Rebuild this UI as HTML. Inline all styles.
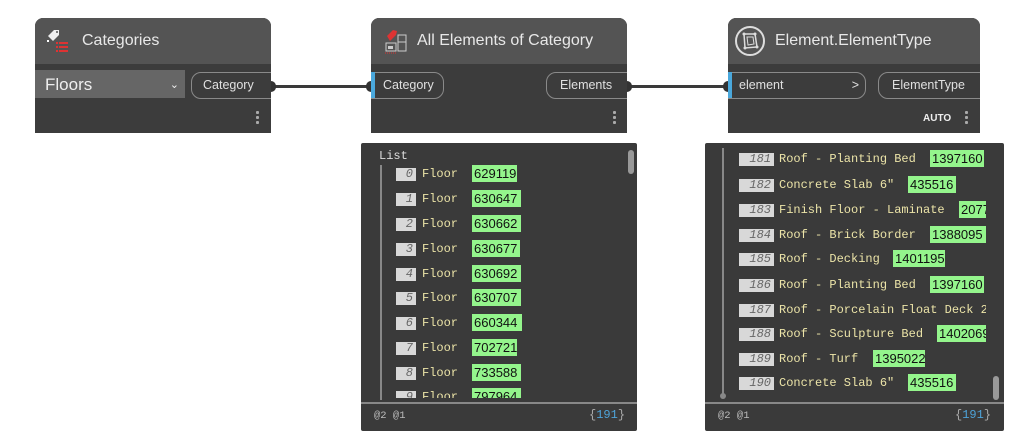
<!DOCTYPE html>
<html><head><meta charset="utf-8"><style>
*{margin:0;padding:0;box-sizing:border-box}
body{width:1016px;height:442px;background:#fff;position:relative;overflow:hidden;font-family:"Liberation Sans",sans-serif}
.abs{position:absolute}
.node{position:absolute;top:18px;height:115px;background:#3c3c3c;border-radius:8px 8px 0 0;overflow:hidden}
.hdr{position:absolute;left:0;right:0;top:0;height:46px;background:#545454}
.title{position:absolute;top:14px;color:#e8e8e8;font-size:16px}
.pill{position:absolute;top:54px;height:27px;border:1px solid #8a8a8a;border-radius:10px;color:#e0e0e0;font-size:12.5px;line-height:25px;padding-left:11px}
.dots{position:absolute;width:3px;top:93px}
.dots i{display:block;width:3px;height:3px;background:#aaa;margin-bottom:2px;border-radius:1px}
.wire{position:absolute;height:3px;top:85px;background:#3a3a3a}
.prev{position:absolute;top:143px;height:288px;background:#3a3a3a;border-radius:2px}
.foot{position:absolute;left:0;right:0;top:259px;height:2px;background:#888}
.ft{position:absolute;top:267px;font-family:"Liberation Mono",monospace;font-size:10.5px;color:#bbb}
.cnt{position:absolute;top:265px;font-family:"Liberation Mono",monospace;font-size:12px;color:#aaa}
.cnt b{color:#4ea3d8;font-weight:normal}
.row{position:absolute;height:18px;font-family:"Liberation Mono",monospace;font-size:12px;color:#ece4a8;line-height:19px;white-space:nowrap}
.ix{position:absolute;top:3px;height:13px;background:#d8d8d8;color:#666;font-style:italic;font-size:12px;line-height:13px;text-align:right;padding-right:3px}
.g{position:absolute;top:0;height:17px;background:#94f58c;color:#111;font-family:"Liberation Sans",sans-serif;font-size:13px;line-height:17px;padding-left:2px;overflow:hidden}
.clip{position:absolute;overflow:hidden}
.sb{position:absolute;width:6px;background:#999;border-radius:3px}
</style></head><body>

<div class="wire" style="left:271px;width:100px"></div>
<div class="wire" style="left:627px;width:101px"></div>
<div class="abs" style="left:270px;top:81px;width:6px;height:11px;background:#333;border-radius:0 5px 5px 0"></div>
<div class="abs" style="left:366px;top:81px;width:6px;height:11px;background:#333;border-radius:5px 0 0 5px"></div>
<div class="abs" style="left:626px;top:81px;width:6px;height:11px;background:#333;border-radius:0 5px 5px 0"></div>
<div class="abs" style="left:723px;top:81px;width:6px;height:11px;background:#333;border-radius:5px 0 0 5px"></div>

<div class="node" style="left:35px;width:236px">
 <div class="hdr"></div>
 <svg class="abs" style="left:10px;top:9px" width="28" height="26" viewBox="0 0 28 26">
  <path d="M3 9 L9 3 L14 3 L14 8 L8 14 Z" fill="#eee"/><circle cx="12" cy="5" r="1" fill="#545454"/>
  <rect x="2" y="13" width="2" height="2" fill="#fff"/>
  <rect x="11" y="15" width="2" height="2" fill="#d33"/><rect x="14" y="15" width="9" height="2" fill="#d33"/>
  <rect x="11" y="19" width="2" height="2" fill="#d33"/><rect x="14" y="19" width="9" height="2" fill="#d33"/>
  <rect x="11" y="23" width="2" height="2" fill="#d33"/><rect x="14" y="23" width="9" height="2" fill="#d33"/>
 </svg>
 <div class="title" style="left:47px">Categories</div>
 <div class="abs" style="left:0;top:52px;width:150px;height:28px;background:#666;color:#eee;font-size:17px;line-height:30px;padding-left:10px">Floors<span class="abs" style="right:6px;top:0;font-size:11px">&#8964;</span></div>
 <div class="pill" style="left:156px;width:90px">Category</div>
 <div class="dots" style="left:221px"><i></i><i></i><i></i></div>
</div>

<div class="node" style="left:371px;width:256px">
 <div class="hdr"></div>
 <svg class="abs" style="left:13px;top:9px" width="26" height="28" viewBox="0 0 26 28">
  <path d="M3 9 L9 3 L13 4 L12 8 L6 14 Z" fill="#d33"/>
  <rect x="2" y="16" width="10" height="8" fill="none" stroke="#ccc"/><rect x="4" y="19" width="5" height="3" fill="#ccc"/>
  <rect x="14" y="8" width="8" height="16" fill="none" stroke="#ccc"/><line x1="14" y1="15" x2="22" y2="15" stroke="#ccc"/>
  <line x1="1" y1="26" x2="12" y2="26" stroke="#d33" stroke-dasharray="1 1"/>
 </svg>
 <div class="title" style="left:46px">All Elements of Category</div>
 <div class="pill" style="left:-10px;width:83px;padding-left:21px">Category</div>
 <div class="abs" style="left:0;top:54px;width:4px;height:26px;background:#4aa8dc"></div>
 <div class="pill" style="left:175px;width:95px;padding-left:13px">Elements</div>
 <div class="dots" style="left:242px"><i></i><i></i><i></i></div>
</div>

<div class="node" style="left:728px;width:252px">
 <div class="hdr"></div>
 <svg class="abs" style="left:6px;top:7px" width="32" height="32" viewBox="0 0 32 32">
  <circle cx="16" cy="16" r="14" fill="none" stroke="#ddd" stroke-width="2"/>
  <path d="M10 9 L21 9 L23 22 L11 23 Z" fill="none" stroke="#ddd" stroke-width="1.5"/>
  <path d="M13 12 L19 12 L20 19 L14 20 Z" fill="none" stroke="#ddd"/>
  <circle cx="10" cy="9" r="1.5" fill="#ddd"/><circle cx="21" cy="9" r="1.5" fill="#ddd"/><circle cx="23" cy="22" r="1.5" fill="#ddd"/><circle cx="11" cy="23" r="1.5" fill="#ddd"/>
 </svg>
 <div class="title" style="left:47px">Element.ElementType</div>
 <div class="pill" style="left:-10px;width:148px;padding-left:20px">element<span class="abs" style="right:6px;top:0">&gt;</span></div>
 <div class="abs" style="left:0;top:54px;width:4px;height:26px;background:#4aa8dc"></div>
 <div class="pill" style="left:150px;width:120px;padding-left:13px">ElementType</div>
 <div class="abs" style="left:195px;top:95px;color:#eee;font-size:10px;font-weight:bold">AUTO</div>
 <div class="dots" style="left:237px"><i></i><i></i><i></i></div>
</div>

<div class="prev" style="left:361px;width:276px">
 <div class="abs" style="left:18px;top:6px;font-family:'Liberation Mono',monospace;font-size:12px;color:#ddd">List</div>
 <div class="abs" style="left:19px;top:22px;width:2px;height:235px;background:#888"></div>
 <div class="sb" style="left:267px;top:7px;height:24px"></div>
 <div class="clip" style="left:0;top:0;width:270px;height:255px">
  <div class="row" style="left:35px;top:22px"><span class="ix" style="left:0;width:20px">0</span><span style="position:absolute;left:26px">Floor</span><span class="g" style="left:76px;width:45px">629119</span></div>
  <div class="row" style="left:35px;top:47px"><span class="ix" style="left:0;width:20px">1</span><span style="position:absolute;left:26px">Floor</span><span class="g" style="left:76px;width:49px">630647</span></div>
  <div class="row" style="left:35px;top:72px"><span class="ix" style="left:0;width:20px">2</span><span style="position:absolute;left:26px">Floor</span><span class="g" style="left:76px;width:49px">630662</span></div>
  <div class="row" style="left:35px;top:97px"><span class="ix" style="left:0;width:20px">3</span><span style="position:absolute;left:26px">Floor</span><span class="g" style="left:76px;width:48px">630677</span></div>
  <div class="row" style="left:35px;top:122px"><span class="ix" style="left:0;width:20px">4</span><span style="position:absolute;left:26px">Floor</span><span class="g" style="left:76px;width:49px">630692</span></div>
  <div class="row" style="left:35px;top:146px"><span class="ix" style="left:0;width:20px">5</span><span style="position:absolute;left:26px">Floor</span><span class="g" style="left:76px;width:49px">630707</span></div>
  <div class="row" style="left:35px;top:171px"><span class="ix" style="left:0;width:20px">6</span><span style="position:absolute;left:26px">Floor</span><span class="g" style="left:76px;width:50px">660344</span></div>
  <div class="row" style="left:35px;top:196px"><span class="ix" style="left:0;width:20px">7</span><span style="position:absolute;left:26px">Floor</span><span class="g" style="left:76px;width:45px">702721</span></div>
  <div class="row" style="left:35px;top:221px"><span class="ix" style="left:0;width:20px">8</span><span style="position:absolute;left:26px">Floor</span><span class="g" style="left:76px;width:49px">733588</span></div>
  <div class="row" style="left:35px;top:245px"><span class="ix" style="left:0;width:20px">9</span><span style="position:absolute;left:26px">Floor</span><span class="g" style="left:76px;width:49px">797964</span></div>
 </div>
 <div class="foot"></div>
 <div class="ft" style="left:13px">@2 @1</div>
 <div class="cnt" style="left:228px">{<b>191</b>}</div>
</div>

<div class="prev" style="left:705px;width:299px">
 <div class="abs" style="left:17px;top:5px;width:2px;height:248px;background:#888"></div>
 <div class="abs" style="left:15px;top:250px;width:6px;height:6px;border-radius:3px;background:#888"></div>
 <div class="sb" style="left:288px;top:233px;height:24px"></div>
 <div class="clip" style="left:0;top:0;width:281px;height:255px">
  <div class="row" style="left:34px;top:7px"><span class="ix" style="left:0;width:35px">181</span><span style="position:absolute;left:40px">Roof - Planting Bed</span><span class="g" style="left:191px;width:54px">1397160</span></div>
  <div class="row" style="left:34px;top:33px"><span class="ix" style="left:0;width:35px">182</span><span style="position:absolute;left:40px">Concrete Slab 6"</span><span class="g" style="left:169px;width:48px">435516</span></div>
  <div class="row" style="left:34px;top:58px"><span class="ix" style="left:0;width:35px">183</span><span style="position:absolute;left:40px">Finish Floor - Laminate</span><span class="g" style="left:220px;width:40px">2077444</span></div>
  <div class="row" style="left:34px;top:83px"><span class="ix" style="left:0;width:35px">184</span><span style="position:absolute;left:40px">Roof - Brick Border</span><span class="g" style="left:191px;width:60px">1388095</span></div>
  <div class="row" style="left:34px;top:107px"><span class="ix" style="left:0;width:35px">185</span><span style="position:absolute;left:40px">Roof - Decking</span><span class="g" style="left:154px;width:52px">1401195</span></div>
  <div class="row" style="left:34px;top:133px"><span class="ix" style="left:0;width:35px">186</span><span style="position:absolute;left:40px">Roof - Planting Bed</span><span class="g" style="left:191px;width:54px">1397160</span></div>
  <div class="row" style="left:34px;top:158px"><span class="ix" style="left:0;width:35px">187</span><span style="position:absolute;left:40px">Roof - Porcelain Float Deck 2</span></div>
  <div class="row" style="left:34px;top:182px"><span class="ix" style="left:0;width:35px">188</span><span style="position:absolute;left:40px">Roof - Sculpture Bed</span><span class="g" style="left:198px;width:60px">1402069</span></div>
  <div class="row" style="left:34px;top:207px"><span class="ix" style="left:0;width:35px">189</span><span style="position:absolute;left:40px">Roof - Turf</span><span class="g" style="left:134px;width:52px">1395022</span></div>
  <div class="row" style="left:34px;top:231px"><span class="ix" style="left:0;width:35px">190</span><span style="position:absolute;left:40px">Concrete Slab 6"</span><span class="g" style="left:169px;width:48px">435516</span></div>
 </div>
 <div class="foot"></div>
 <div class="ft" style="left:13px">@2 @1</div>
 <div class="cnt" style="left:250px">{<b>191</b>}</div>
</div>
</body></html>
